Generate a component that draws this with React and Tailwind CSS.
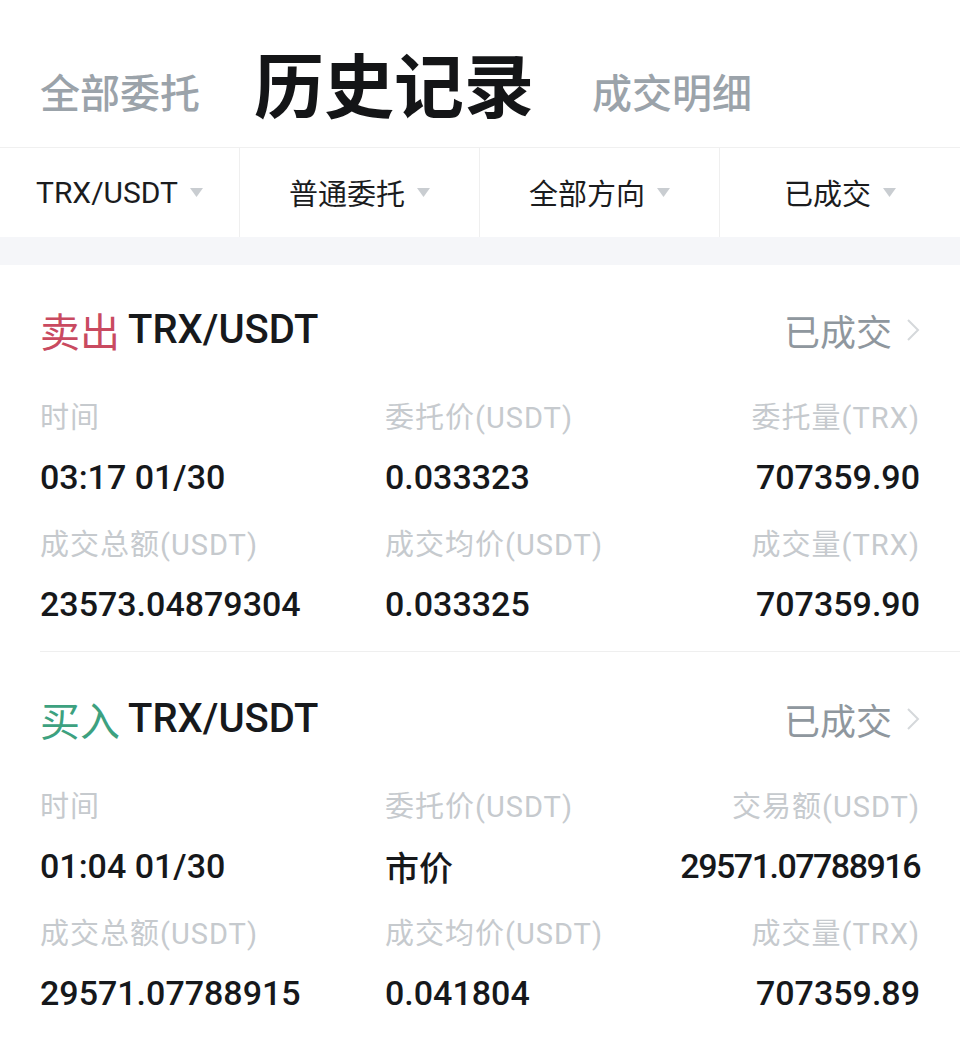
const CJK = '"Noto Sans CJK SC", sans-serif';
const NUM = 'Roboto, "Noto Sans CJK SC", sans-serif';

function Tri() {
  return (
    <svg width="13" height="10" viewBox="0 0 13 10" className="ml-3 shrink-0">
      <path d="M0 0 H13 L6.5 9 Z" fill="#c9cdd1" />
    </svg>
  );
}

function Chevron() {
  return (
    <svg width="14" height="24" viewBox="0 0 14 24" className="ml-[14px]">
      <path d="M2 2 L12 12 L2 22" fill="none" stroke="#d5d8db" strokeWidth="2" />
    </svg>
  );
}

function Filter({ label, last, latin }) {
  return (
    <div
      className={`flex items-center justify-center h-full ${last ? '' : 'border-r border-[#efefef]'}`}
    >
      <span
        className={`text-[#1b1c1e] leading-none ${latin ? 'text-[30px]' : 'text-[29px]'}`}
        style={{ fontFamily: latin ? NUM : CJK }}
      >
        {label}
      </span>
      <Tri />
    </div>
  );
}

function Label({ children, right }) {
  return (
    <div
      className={`h-[58px] flex items-center text-[29px] tracking-[1px] text-[#c6cace] ${right ? 'justify-end' : ''}`}
      style={{ fontFamily: NUM }}
    >
      {children}
    </div>
  );
}

function Value({ children, right, cjk, tight }) {
  return (
    <div
      className={`h-[58px] flex items-center text-[34px] font-medium text-[#16181b] ${right ? 'justify-end' : ''} ${tight ? 'tracking-[-1.5px]' : ''}`}
      style={{ fontFamily: cjk ? CJK : NUM }}
    >
      {children}
    </div>
  );
}

function Pair({ cells }) {
  return (
    <div className="flex">
      <div className="w-[345px]">
        <Label>{cells[0][0]}</Label>
        <Value>{cells[0][1]}</Value>
      </div>
      <div className="flex-1">
        <Label>{cells[1][0]}</Label>
        <Value cjk={cells[1][2]}>{cells[1][1]}</Value>
      </div>
      <div className="text-right">
        <Label right>{cells[2][0]}</Label>
        <Value right tight={cells[2][2]}>{cells[2][1]}</Value>
      </div>
    </div>
  );
}

function Order({ side, sideColor, rows, divider, top }) {
  return (
    <div className={divider ? 'border-b border-[#efefef] ml-10' : 'ml-10'}>
      <div className={`pr-10 pb-[18px] ${top}`}>
        <div className="h-[60px] flex items-center justify-between">
          <div className="flex items-center">
            <span className="text-[40px] leading-none" style={{ fontFamily: CJK, color: sideColor }}>
              {side}
            </span>
            <span
              className="text-[40px] leading-none font-medium text-[#17191c] ml-[8px]"
              style={{ fontFamily: NUM }}
            >
              TRX/USDT
            </span>
          </div>
          <div className="flex items-center">
            <span className="text-[36px] leading-none text-[#8f979e]" style={{ fontFamily: CJK }}>
              已成交
            </span>
            <Chevron />
          </div>
        </div>
        <div className="mt-[30px] flex flex-col gap-[11px]">
          <Pair cells={rows[0]} />
          <Pair cells={rows[1]} />
        </div>
      </div>
    </div>
  );
}

export default function App() {
  return (
    <div className="w-[960px] h-[1040px] bg-white overflow-hidden">
      <div
        className="h-[148px] flex items-end pb-[29px] pl-10 border-b border-[#f0f0f0]"
        style={{ fontFamily: CJK }}
      >
        <span className="text-[40px] font-medium text-[#9ba3aa] leading-none mb-[7px]">全部委托</span>
        <span className="text-[70px] font-bold text-[#141517] leading-none ml-[54px]">历史记录</span>
        <span className="text-[40px] font-medium text-[#9ba3aa] leading-none ml-[58px] mb-[7px]">成交明细</span>
      </div>
      <div className="h-[89px] grid grid-cols-4">
        <Filter label="TRX/USDT" latin />
        <Filter label="普通委托" />
        <Filter label="全部方向" />
        <Filter label="已成交" last />
      </div>
      <div className="h-[28px] bg-[#f5f6f9]" />
      <Order
        side="卖出"
        sideColor="#c94a60"
        divider
        top="pt-[35px]"
        rows={[
          [['时间', '03:17 01/30'], ['委托价(USDT)', '0.033323'], ['委托量(TRX)', '707359.90']],
          [['成交总额(USDT)', '23573.04879304'], ['成交均价(USDT)', '0.033325'], ['成交量(TRX)', '707359.90']],
        ]}
      />
      <Order
        side="买入"
        sideColor="#3da17f"
        top="pt-[37px]"
        rows={[
          [['时间', '01:04 01/30'], ['委托价(USDT)', '市价', true], ['交易额(USDT)', '29571.07788916', true]],
          [['成交总额(USDT)', '29571.07788915'], ['成交均价(USDT)', '0.041804'], ['成交量(TRX)', '707359.89']],
        ]}
      />
    </div>
  );
}
